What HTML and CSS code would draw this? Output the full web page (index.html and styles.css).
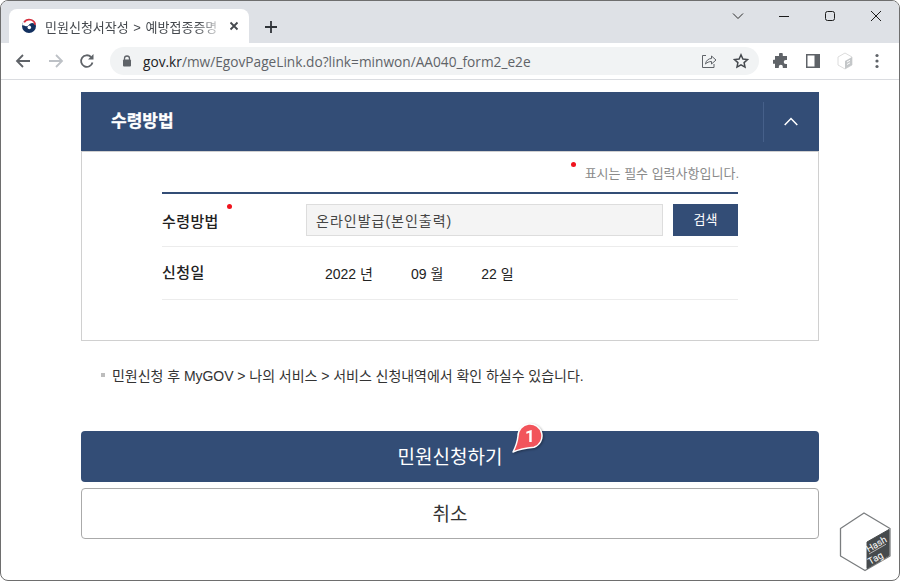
FILE: index.html
```html
<!DOCTYPE html>
<html lang="ko">
<head>
    <meta charset="UTF-8">
    <title>민원신청서작성 > 예방접종증명</title>
    <link rel="stylesheet" href="styles.css">
</head>
<body>
<div class="window">
    <div class="titlebar">
        <div class="tab">
            <svg class="favicon" width="16" height="16" viewBox="0 0 16 16">
                <circle cx="8" cy="8" r="7" fill="#12305f"/>
                <path d="M1.200 7.500a6.800 6.800 0 0 1 13.600 0c-.6-1.800-2-2.600-3.600-2.600C9.400 4.900 8.600 6 7.800 7c-1 1.200-2.300 1.500-3.500 1.100-1.300-.4-2.300-1-3.100-.6z" fill="#fff"/>
                <path d="M3.200 4.400A6 6 0 0 1 14.200 6.800" fill="none" stroke="#d8313f" stroke-width="1.700"/>
                <circle cx="8.300" cy="9.400" r="1.800" fill="#fff"/>
            </svg>
            <span class="tab-title">민원신청서작성 &gt; 예방접종증명</span>
            <svg class="tab-close" width="10" height="10" viewBox="0 0 10 10"><path d="M1.500 1.500l7 7M8.500 1.500l-7 7" stroke="#45494e" stroke-width="1.800"/></svg>
        </div>
        <svg class="new-tab" width="14" height="14" viewBox="0 0 14 14"><path d="M7 1v12M1 7h12" stroke="#2f3338" stroke-width="1.800"/></svg>
        <div class="win-controls">
            <svg width="12" height="8" viewBox="0 0 12 8"><path d="M1 1.500l5 5 5-5" fill="none" stroke="#2a2a2a"/></svg>
            <svg width="12" height="12" viewBox="0 0 12 12"><path d="M1 6.500h10" stroke="#1c1c1c"/></svg>
            <svg width="12" height="12" viewBox="0 0 12 12"><rect x="1.500" y="1.500" width="9" height="9" rx="2" fill="none" stroke="#1c1c1c"/></svg>
            <svg width="12" height="12" viewBox="0 0 12 12"><path d="M1 1l10 10M11 1L1 11" stroke="#1c1c1c"/></svg>
        </div>
    </div>

    <div class="toolbar">
        <div class="nav-icons">
            <svg width="16" height="16" viewBox="0 0 16 16"><path d="M15 8H2M8 2L2 8l6 6" fill="none" stroke="#5f6368" stroke-width="1.800"/></svg>
            <svg width="16" height="16" viewBox="0 0 16 16"><path d="M1 8h13M8 2l6 6-6 6" fill="none" stroke="#bdc1c6" stroke-width="1.800"/></svg>
            <svg class="reload" width="16" height="16" viewBox="0 0 16 16"><path d="M13.500 9.500A5.800 5.800 0 1 1 12 4" fill="none" stroke="#5f6368" stroke-width="1.800"/><path d="M14.500 1v5.500H9z" fill="#5f6368"/></svg>
        </div>
        <div class="omnibox">
            <svg width="10" height="12" viewBox="0 0 10 12"><path d="M2.500 5V3.500a2.500 2.500 0 0 1 5 0V5" fill="none" stroke="#5f6368" stroke-width="1.300"/><rect x="1" y="4.500" width="8" height="7" rx="1" fill="#5f6368"/></svg>
            <span class="url"><b>gov.kr</b>/mw/EgovPageLink.do?link=minwon/AA040_form2_e2e</span>
            <svg class="share" width="16" height="16" viewBox="0 0 16 16"><path d="M5 2.500H1.500v12H13V11" fill="none" stroke="#5f6368"/><path d="M4.500 11c.5-3.500 3-5.500 6-5.500V3l4.500 4-4.500 4V8.500c-2.500 0-4.500 1-6 2.500z" fill="none" stroke="#5f6368"/></svg>
            <svg class="star" width="16" height="16" viewBox="0 0 16 16"><path d="M8 1.800l1.900 4.200 4.600.5-3.400 3.100.9 4.500-4-2.300-4 2.300.9-4.500-3.400-3.100 4.600-.5z" fill="none" stroke="#45494e" stroke-width="1.500"/></svg>
        </div>
        <div class="ext-icons">
            <span class="ext"><svg width="16" height="16" viewBox="0 0 16 16"><path d="M6 1.500a1.900 1.900 0 0 1 3.800 0V3H14v4h-1.300a2 2 0 0 0 0 4H14v4H9.800v-1.300a2 2 0 0 0-4 0V15H2v-4.200H.8a2 2 0 0 1 0-4H2V3h4z" fill="#5f6368"/></svg></span>
            <span class="ext"><svg width="14" height="14" viewBox="0 0 14 14"><rect width="14" height="14" fill="#5f6368"/><rect x="1.500" y="1.500" width="7" height="11" fill="#fff"/></svg></span>
            <span class="ext"><svg width="16" height="18" viewBox="0 0 16 18"><path d="M8 1l7 4v8l-7 4-7-4V5z" fill="#fff" stroke="#dcdcdc"/><path d="M8 9l7-4v8l-7 4z" fill="#c4c7c9"/><path d="M10 10l3-1.700M10 12.500l3-1.700" stroke="#fff"/></svg></span>
            <span class="ext"><svg width="4" height="16" viewBox="0 0 4 16"><circle cx="2" cy="2.500" r="1.600" fill="#5f6368"/><circle cx="2" cy="8" r="1.600" fill="#5f6368"/><circle cx="2" cy="13.500" r="1.600" fill="#5f6368"/></svg></span>
        </div>
    </div>

    <div class="page">
        <div class="section-head">
            <h2>수령방법</h2>
            <div class="toggle">
                <svg width="14" height="9" viewBox="0 0 14 9"><path d="M.7 8L7 1.500 13.300 8" fill="none" stroke="#fff" stroke-width="1.500"/></svg>
            </div>
        </div>
        <div class="section-body">
            <p class="req-note"><i class="dot"></i>표시는 필수 입력사항입니다.</p>
            <div class="form-table">
                <div class="row row-method">
                    <div class="label">수령방법<i class="dot"></i></div>
                    <div class="field">온라인발급(본인출력)</div>
                    <button class="search-btn">검색</button>
                </div>
                <div class="row row-date">
                    <div class="label">신청일</div>
                    <div class="dates">
                        <span>2022 년</span>
                        <span>09 월</span>
                        <span>22 일</span>
                    </div>
                </div>
            </div>
        </div>

        <p class="info">민원신청 후 MyGOV &gt; 나의 서비스 &gt; 서비스 신청내역에서 확인 하실수 있습니다.</p>

        <button class="btn btn-submit">민원신청하기</button>
        <button class="btn btn-cancel">취소</button>
    </div>

    <!-- callout over the submit button -->
    <svg class="callout" width="40" height="36" viewBox="0 0 40 36">
        <path d="M10 29C13 23 14.500 18 15 13A12 12 0 1 1 31 24.300C24 25 17 26 10 29z" fill="#f2545b" stroke="#fff" stroke-width="1.500" stroke-linejoin="round"/>
        <text x="27" y="19" class="callout-num">1</text>
    </svg>

    <svg class="hashtag" width="54" height="60" viewBox="0 0 54 60">
        <path d="M25 1l26 15.500v27.500L26 58.500 1.500 44V16.500z" fill="#fff" stroke="#7a7d7f" stroke-width="1.300" stroke-linejoin="round"/>
        <path d="M28 30l22-12.500v26L28 56.500z" fill="#464a4c" stroke="#464a4c" stroke-linejoin="round"/>
        <text class="hash-text" transform="translate(39 35) rotate(-30)" text-anchor="middle">Hash</text>
        <path d="M30 42l17-9.800" stroke="#fff" stroke-width="0.600"/>
        <text class="hash-text" transform="translate(38 49) rotate(-30)" text-anchor="middle">Tag</text>
    </svg>
</div>
</body>
</html>
```

FILE: styles.css
```css
* {
    box-sizing: border-box;
}

html, body {
    margin: 0;
    height: 100%;
    background: #fff;
}

body {
    font-family: "Liberation Sans", "Noto Sans CJK KR", sans-serif;
    color: #222;
    overflow: hidden;
}

.window {
    position: relative;
    width: 900px;
    height: 581px;
    border: 1px solid #6e6e6e;
    border-radius: 8px;
    overflow: hidden;
    background: #fff;
}

/* browser chrome */
.titlebar {
    display: flex;
    align-items: flex-start;
    height: 42px;
    padding: 8px 0 0 8px;
    background: #dee1e6;
}

.tab {
    display: flex;
    align-items: center;
    width: 240px;
    height: 34px;
    padding: 0 10px 0 12px;
    background: #fff;
    border-radius: 8px 8px 0 0;
}

.favicon {
    flex: none;
}

.tab-title {
    flex: 1;
    margin: 0 11px 0 8px;
    font-size: 13px;
    word-spacing: 1px;
    color: #45494e;
    white-space: nowrap;
    -webkit-mask-image: linear-gradient(to right, #000 88%, rgba(0, 0, 0, 0.25));
    mask-image: linear-gradient(to right, #000 88%, rgba(0, 0, 0, 0.25));
}

.new-tab {
    margin: 11px 0 0 15px;
}

.win-controls {
    display: flex;
    align-items: center;
    gap: 34px;
    height: 14px;
    margin-left: auto;
    margin-right: 17px;
}

.toolbar {
    display: flex;
    align-items: center;
    height: 37px;
    padding-left: 14px;
    border-bottom: 1px solid #dadce0;
}

.nav-icons {
    display: flex;
    gap: 17px;
}

.reload {
    margin-left: -2px;
}

.omnibox {
    display: flex;
    align-items: center;
    width: 649px;
    height: 28px;
    margin-left: 15px;
    padding: 0 10px 0 12px;
    background: #f1f3f4;
    border-radius: 14px;
}

.url {
    margin-left: 11px;
    font-family: "Open Sans", "Noto Sans", sans-serif;
    font-size: 13.700px;
    color: #5f6368;
    white-space: nowrap;
}

.url b {
    font-weight: 400;
    color: #202124;
}

.share {
    margin-left: auto;
}

.star {
    margin-left: 16px;
}

.ext-icons {
    display: flex;
    align-items: center;
    margin-left: 6px;
}

.ext {
    display: flex;
    align-items: center;
    justify-content: center;
    width: 32px;
}

/* page */
.page {
    display: flex;
    flex-direction: column;
    padding: 12px 80px 0;
}

.section-head {
    display: flex;
    align-items: center;
    justify-content: space-between;
    height: 60px;
    padding-left: 30px;
    background: #334d76;
    border-bottom: 1px solid #d0d0d0;
}

.section-head h2 {
    margin: 0 0 5px;
    font-size: 17px;
    color: #fff;
    -webkit-text-stroke: 0.3px #fff;
}

.toggle {
    display: flex;
    align-items: center;
    justify-content: center;
    width: 56px;
    height: 40px;
    padding-right: 2px;
    border-left: 1px solid #46608a;
}

.section-body {
    height: 189px;
    padding: 0 80px;
    border: 1px solid #d0d0d0;
    border-top: 0;
}

.dot {
    display: inline-block;
    width: 5px;
    height: 5px;
    background: #f0141e;
    border-radius: 50%;
}

.req-note {
    display: flex;
    height: 40px;
    margin: 0 -1px 0 0;
    padding-top: 11px;
    justify-content: flex-end;
    font-size: 13px;
    color: #8a8a8a;
}

.req-note .dot {
    margin: -1px 9px 0 0;
}

.form-table {
    border-top: 2px solid #334d76;
}

.row {
    display: flex;
    align-items: center;
    height: 53px;
    border-bottom: 1px solid #ececec;
}

.label {
    position: relative;
    width: 144px;
    font-size: 15px;
    font-weight: 500;
    letter-spacing: 0.400px;
}

.label .dot {
    position: absolute;
    top: -6px;
    left: 65px;
}

.row-date .label {
    margin-bottom: 4px;
}

.field {
    display: flex;
    align-items: center;
    width: 357px;
    height: 32px;
    padding-left: 9px;
    font-size: 14px;
    letter-spacing: 1px;
    color: #444;
    background: #f4f4f4;
    border: 1px solid #ddd;
}

.search-btn {
    width: 65px;
    height: 32px;
    margin-left: 10px;
    padding-bottom: 4px;
    font: inherit;
    font-size: 13px;
    color: #fff;
    background: #334d76;
    border: 0;
}

.dates {
    display: flex;
    gap: 38px;
    padding-left: 19px;
    font-size: 14px;
}

.info {
    display: flex;
    align-items: center;
    margin: 25px 0 48px;
    padding-left: 20px;
    height: 17px;
    font-size: 14px;
    letter-spacing: -0.040px;
    color: #333;
}

.info::before {
    content: "";
    width: 4px;
    height: 4px;
    margin-right: 7px;
    background: #bdbdbd;
}

.btn {
    display: block;
    width: 100%;
    height: 51px;
    padding-bottom: 3px;
    font: inherit;
    font-size: 19px;
    font-weight: 400;
    border-radius: 4px;
}

.btn-submit {
    color: #fff;
    background: #334d76;
    border: 0;
}

.btn-cancel {
    margin-top: 6px;
    color: #333;
    background: #fff;
    border: 1px solid #aaa;
}

.callout {
    position: absolute;
    left: 502px;
    top: 422px;
    filter: drop-shadow(1px 1px 1px rgba(0, 0, 0, 0.35));
}

.callout-num {
    font-family: Roboto, sans-serif;
    font-size: 17px;
    font-weight: 700;
    fill: #fff;
    text-anchor: middle;
}

.hashtag {
    position: absolute;
    left: 838px;
    top: 511px;
}

.hash-text {
    font-family: Roboto, sans-serif;
    font-size: 9.500px;
    fill: #fff;
}
```
